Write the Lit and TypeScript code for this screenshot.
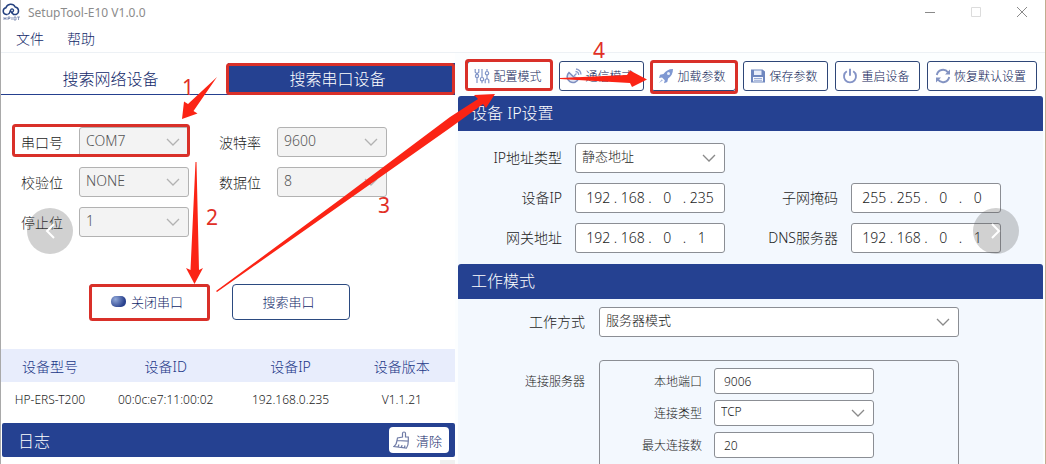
import { LitElement, html, css, svg, nothing, TemplateResult } from "lit";
import { customElement } from "lit/decorators.js";
import { classMap } from "lit/directives/class-map.js";

const chevron = html`<svg class="chev" viewBox="0 0 14 8" width="14" height="8" aria-hidden="true">
  <path d="M1 1l6 6 6-6" fill="none" stroke="currentColor" stroke-width="1.3" />
</svg>`;

const icons: Record<string, TemplateResult> = {
  sliders: svg`<g fill="none" stroke="#8296c8" stroke-width="1.2">
    <path d="M1.200 1v3.200l1.800 1.600 1.800-1.600V1M3 5.800v9.200M8 1v8.500M8 13v2.200M13 1v2.500M13 7v3.200M11.200 15.200V12l1.800-1.600 1.800 1.600v3.200"/>
    <circle cx="3" cy="8" r="1.600" fill="#fff"/><circle cx="8" cy="11.200" r="1.700" fill="#fff"/><circle cx="13" cy="5.200" r="1.700" fill="#fff"/></g>`,
  dish: svg`<path d="M3 4.500a5.800 5.800 0 1 0 9.500 6L7.800 9z" fill="#dfe5f4" stroke="#7f8fc0" stroke-width="1.600"/>
    <path d="M8 8l2.500-2.500M9.500 3.500a3.500 3.500 0 0 1 3.200 3.500M10 1a6 6 0 0 1 5 5.500" fill="none" stroke="#8e9dca" stroke-width="1.300"/>`,
  rocket: svg`<path d="M15 1C10.500 1 7.500 3 5.500 6L2 6.800 1 10l3-.4L6.800 12.300 6 15.300l3.300-1.200.8-3.600C13.200 8.500 15 5.500 15 1z" fill="#7f98d2"/>
    <circle cx="10.500" cy="5.500" r="1.500" fill="#eaf0fb"/><path d="M3.800 11.300L1 15l3.800-2.600z" fill="#a5b6df"/>`,
  save: svg`<path d="M1 1.500h11.500l2.500 2v11H1z" fill="#6f87bf"/>
    <path d="M4 2.500h7.500v4.500H4z" fill="#e9eefa"/><path d="M3 9h10v4.500H3z" fill="#f6f8fd"/>
    <path d="M4 10.500h8M4 12.300h8" stroke="#8fa2d0" stroke-width=".9"/>`,
  power: svg`<path d="M4.800 3.300a6 6 0 1 0 6.400 0" fill="none" stroke="#8493c6" stroke-width="1.900"/>
    <path d="M8 .8v7" stroke="#8493c6" stroke-width="1.900"/>`,
  reset: svg`<path d="M1.800 7A6.300 6.300 0 0 1 13 4.300M14.200 9A6.300 6.300 0 0 1 3 11.700" fill="none" stroke="#8393c2" stroke-width="1.900"/>
    <path d="M15 1.500v5h-5zM1 14.500v-5h5z" fill="#8393c2"/>`,
};

const icon = (name: string) =>
  html`<svg class="ico" viewBox="0 0 16 16" width="16" height="16" aria-hidden="true">${icons[name]}</svg>`;

@customElement("app-root")
export class AppRoot extends LitElement {
  static styles = css`
    :host {
      display: block;
      font-family: "Noto Sans", "Noto Sans CJK SC", sans-serif;
      font-size: 14px;
      font-weight: 300;
      color: #1c1c1c;
    }
    * { box-sizing: border-box; }
    button, select, input { font: inherit; color: inherit; margin: 0; }
    button { cursor: pointer; }
    .window {
      position: relative;
      height: 100vh;
      overflow: hidden;
      display: flex;
      flex-direction: column;
      background: #fff;
      border-left: 1px solid #a9a9a9;
      border-right: 1px solid #c2ad8f;
    }
    .titlebar {
      display: flex;
      align-items: center;
      height: 24px;
      flex: none;
      font-size: 12px;
      font-weight: 400;
      color: #8b8b8b;
    }
    .logo { margin-left: 1px; }
    .title { margin-left: 8px; flex: 1; }
    .winctl {
      display: flex;
      width: 46px;
      padding: 0;
      border: 0;
      background: none;
      justify-content: center;
      color: #8a8a8a;
    }
    .winctl.dim { color: #dcdcdc; }
    .menu {
      display: flex;
      flex: none;
      gap: 23px;
      height: 29px;
      padding: 2px 15px 0;
      border-bottom: 1px solid #edf1f5;
      align-items: center;
    }
    .menu button {
      border: 0;
      padding: 0;
      background: none;
      color: #12296a;
      line-height: 20px;
      height: 22px;
    }
    .main {
      flex: 1;
      min-height: 0;
      display: grid;
      grid-template-columns: 454fr 585fr;
      column-gap: 3px;
      padding-right: 2px;
      background: #fcfeff;
    }
    .left { background: #fff; display: flex; flex-direction: column; min-width: 0; }
    .tabs {
      display: flex;
      margin-top: 10px;
      height: 32px;
      flex: none;
      border-bottom: 1px solid #25408f;
    }
    .tab {
      flex: 1;
      border: 0;
      padding: 0 8px 2px 0;
      background: none;
      font-size: 16px;
      color: #12296a;
    }
    .tab.on { background: #254191; color: #fff; }
    .serial {
      display: grid;
      grid-template-columns: 42px 110px 56px 110px;
      column-gap: 16px;
      row-gap: 10px;
      margin: 32px 20px 0;
      align-items: center;
    }
    .serial .second { padding-left: 14px; }
    .pick { display: grid; align-items: center; }
    .pick select, .pick .chev { grid-area: 1 / 1; }
    .pick .chev { justify-self: end; margin-right: 9px; pointer-events: none; color: #8a8a8a; }
    .pick select, .box {
      appearance: none;
      width: 100%;
      height: 30px;
      padding: 0 6px 2px;
      border: 1px solid #8b8e94;
      border-radius: 3px;
      background: #fff;
      color: #1c1c1c;
      outline: 0;
    }
    .pick select { font-size: 13px; padding-bottom: 4px; }
    .pick.off select {
      font-size: 14px;
      background: #f3f3f3;
      border-color: #b2b2b2;
      color: #555;
      opacity: 1;
    }
    .pick.off .chev { color: #b2b2b2; }
    .actions { display: flex; gap: 22px; margin: 47px 88px 0; }
    .actions button {
      display: flex;
      align-items: center;
      justify-content: center;
      gap: 5px;
      width: 118px;
      height: 36px;
      padding: 0 5px 2px 0;
      font-size: 13px;
      border: 1px solid #2b4a80;
      border-radius: 4px;
      background: #fff;
      color: #12296a;
    }
    .actions button:first-child { width: 121px; }
    .led { width: 15px; height: 11px; border-radius: 5px; background: radial-gradient(circle at 30% 30%, #92a9d9, #2b438f 70%); }
    table {
      width: 100%;
      margin-top: 29px;
      border-collapse: collapse;
      table-layout: fixed;
      text-align: center;
      flex: none;
    }
    th { height: 33px; padding: 0 2px 0 0; background: #e8edfc; color: #1b3687; font-weight: inherit; }
    td { height: 41px; padding: 0 2px 6px 0; font-size: 12px; }
    .c1 { width: 22%; }
    .c2 { width: 29%; }
    .c3 { width: 26%; }
    .log {
      display: flex;
      flex: none;
      align-items: center;
      justify-content: space-between;
      height: 34px;
      padding: 0 6px 0 16px;
      margin-left: 1px;
      border-radius: 2px;
      background: #254191;
      color: #fff;
    }
    h2 { margin: 0; font-size: 16px; font-weight: inherit; }
    .clear {
      display: flex;
      align-items: center;
      gap: 5px;
      height: 26px;
      padding: 0 7px 0 4px;
      border: 0;
      border-radius: 4px;
      background: #fff;
      color: #12296a;
      font-size: 13px;
    }
    .logbody { flex: 1; display: flex; justify-content: flex-end; padding-top: 3px; }
    .bar { width: 15px; background: #f0f0f0; }
    .right { display: flex; flex-direction: column; min-width: 0; }
    .tools { display: flex; gap: 7px; padding: 8px 0 5px 9px; flex: none; }
    .tools button {
      display: flex;
      align-items: center;
      justify-content: center;
      gap: 3px;
      width: 85px;
      height: 30px;
      padding: 0 3px 0 0;
      white-space: nowrap;
      font-size: 12px;
      border: 1px solid #2e4677;
      border-radius: 3px;
      background: #fff;
      color: #0f2458;
    }
    .tools button.wide { width: 110px; }
    .bar2 {
      display: flex;
      align-items: center;
      flex: none;
      height: 35px;
      padding: 0 13px 3px;
      border-radius: 3px 3px 0 0;
      background: #254191;
      color: #fff;
    }
    .ip {
      display: grid;
      grid-template-columns: 104px 150px 100px 150px;
      column-gap: 13px;
      row-gap: 10px;
      padding: 12px 0 11px;
      align-items: center;
      background: #f3f8fe;
    }
    .lab { text-align: right; white-space: nowrap; padding-bottom: 2px; }
    .ip .third { grid-column: 3; }
    .ip .brk { grid-column: 1; }
    .addr { display: flex; align-items: center; height: 30px; padding: 0 10px 2px; }
    .addr input {
      width: 25px;
      min-width: 0;
      padding: 0;
      border: 0;
      text-align: center;
      background: none;
      outline: 0;
    }
    .addr span { width: 10px; text-align: center; }
    .work { flex: 1; background: #f3f8fe; padding: 8px 84px 0 0; }
    .workgrid {
      display: grid;
      grid-template-columns: 127px 1fr;
      column-gap: 14px;
      row-gap: 23px;
      align-items: start;
    }
    .workgrid > .lab { padding-top: 4px; }
    .small { font-size: 12px; }
    .workgrid > .small { padding-top: 12px; }
    .server {
      display: grid;
      grid-template-columns: 102px 160px;
      column-gap: 12px;
      row-gap: 6px;
      align-items: center;
      min-width: 0;
      height: 140px;
      align-content: start;
      margin: 0;
      padding: 7px 0;
      border: 1px solid #8b8e94;
      border-radius: 4px;
      font-size: 12px;
    }
    .server .lab { padding: 0; }
    .server select { height: 26px; font-size: 12px; }
    .server .box { height: 26px; padding: 0 9px; }
    .nav {
      position: absolute;
      top: 208px;
      width: 46px;
      height: 46px;
      padding: 0;
      border: 0;
      border-radius: 50%;
      background: rgba(90, 90, 90, 0.28);
      display: grid;
      place-items: center;
    }
    .nav.prev { left: 26px; }
    .nav.next { right: 26px; }
    .notes { position: absolute; top: 0; left: -1px; pointer-events: none; }
    .note { font-size: 21px; font-weight: 400; fill: #e12f26; }
  `;

  private pick(id: string, options: string[], off = false) {
    return html`<div class=${classMap({ pick: true, off })}>
      <select id=${id} ?disabled=${off}>${options.map((o) => html`<option>${o}</option>`)}</select>${chevron}
    </div>`;
  }

  private serialField(id: string, label: string, value: string, second = false) {
    return html`<label for=${id} class=${second ? "second" : nothing}>${label}</label>${this.pick(id, [value], true)}`;
  }

  private address(id: string, label: string, parts: string[], cls: string) {
    return html`<label class="lab ${cls}" for=${id}>${label}</label>
      <div class="box addr">
        ${parts.map((p, i) => html`${i ? html`<span>.</span>` : nothing}<input
            id=${i ? `${id}-${i}` : id} aria-label="${label} ${i + 1}" maxlength="3" .value=${p} />`)}
      </div>`;
  }

  render() {
    return html`<div class="window">
      <header class="titlebar">
        <svg class="logo" width="18" height="18" viewBox="0 0 18 18" aria-hidden="true">
          <path d="M5.500 11.500H4.200a3.400 3.400 0 0 1-.3-6.700A5 5 0 0 1 13.200 4a3.900 3.900 0 0 1 .8 7.500h-2.500L8 7.500" fill="none" stroke="#24407f" stroke-width="1.500"/>
          <path d="M5.500 11.500C7 11 8 9.500 8.500 7.500S11 5.500 11.500 7 10 9.500 9 10" fill="none" stroke="#24407f" stroke-width="1.300"/>
          <path d="M2 14v3M4 14v3M2 15.500h2M6 17v-3h2v1.500H6M10 14v3M12 14h2v3h-2zM15 14h3M16.500 14v3" fill="none" stroke="#5b6f9d" stroke-width=".7"/>
        </svg>
        <span class="title">SetupTool-E10 V1.0.0</span>
        <button class="winctl" aria-label="最小化"><svg width="12" height="12"><path d="M1 6.500h10" stroke="currentColor"/></svg></button>
        <button class="winctl dim" aria-label="最大化"><svg width="12" height="12"><path d="M1.500 1.500h9v9h-9z" fill="none" stroke="currentColor"/></svg></button>
        <button class="winctl" aria-label="关闭"><svg width="12" height="12"><path d="M1 1l10 10M11 1L1 11" stroke="currentColor"/></svg></button>
      </header>
      <nav class="menu"><button>文件</button><button>帮助</button></nav>

      <div class="main">
        <section class="left">
          <div class="tabs" role="tablist">
            <button class="tab" role="tab">搜索网络设备</button>
            <button class="tab on" role="tab" aria-selected="true">搜索串口设备</button>
          </div>
          <div class="serial">
            ${this.serialField("port", "串口号", "COM7")}
            ${this.serialField("baud", "波特率", "9600", true)}
            ${this.serialField("parity", "校验位", "NONE")}
            ${this.serialField("data", "数据位", "8", true)}
            ${this.serialField("stop", "停止位", "1")}
          </div>
          <div class="actions">
            <button><span class="led"></span>关闭串口</button>
            <button>搜索串口</button>
          </div>
          <table>
            <thead><tr><th class="c1">设备型号</th><th class="c2">设备ID</th><th class="c3">设备IP</th><th>设备版本</th></tr></thead>
            <tbody><tr><td>HP-ERS-T200</td><td>00:0c:e7:11:00:02</td><td>192.168.0.235</td><td>V1.1.21</td></tr></tbody>
          </table>
          <div class="log">
            <h2>日志</h2>
            <button class="clear">
              <svg width="18" height="18" viewBox="0 0 18 18" fill="none" stroke="#6f7ba6" stroke-width="1.200" aria-hidden="true">
                <path d="M9.500 6V2.500a1.500 1.500 0 0 1 3 0V6h2.800v4L4 9.500 4.500 7zM4 9.500C3.500 13 2.500 14.500 1 15.500l12.500 1.500c1.200-1.500 1.800-4 1.800-7M5 16l1-2.500M8.500 16.500l.5-2.500M11.500 16.500l.5-2"/>
              </svg>清除
            </button>
          </div>
          <div class="logbody"><div class="bar"></div></div>
        </section>

        <section class="right">
          <div class="tools">
            <button>${icon("sliders")}配置模式</button>
            <button>${icon("dish")}通信模式</button>
            <button>${icon("rocket")}加载参数</button>
            <button>${icon("save")}保存参数</button>
            <button>${icon("power")}重启设备</button>
            <button class="wide">${icon("reset")}恢复默认设置</button>
          </div>
          <div class="bar2"><h2>设备 IP设置</h2></div>
          <div class="ip">
            <label class="lab" for="iptype">IP地址类型</label>${this.pick("iptype", ["静态地址", "动态地址"])}
            ${this.address("devip", "设备IP", ["192", "168", "0", "235"], "brk")}
            ${this.address("mask", "子网掩码", ["255", "255", "0", "0"], "third")}
            ${this.address("gate", "网关地址", ["192", "168", "0", "1"], "brk")}
            ${this.address("dns", "DNS服务器", ["192", "168", "0", "1"], "third")}
          </div>
          <div class="bar2"><h2>工作模式</h2></div>
          <div class="work">
            <div class="workgrid">
              <label class="lab" for="mode">工作方式</label>${this.pick("mode", ["服务器模式", "客户端模式"])}
              <span class="lab small" id="srv">连接服务器</span>
              <fieldset class="server" aria-labelledby="srv">
                <label class="lab" for="lport">本地端口</label><input class="box" id="lport" .value=${"9006"} />
                <label class="lab" for="ctype">连接类型</label>${this.pick("ctype", ["TCP", "UDP"])}
                <label class="lab" for="maxc">最大连接数</label><input class="box" id="maxc" .value=${"20"} />
              </fieldset>
            </div>
          </div>
        </section>
      </div>

      <button class="nav prev" aria-label="上一张"><svg width="10" height="16"><path d="M9 1L2 8l7 7" fill="none" stroke="#fff" stroke-width="2"/></svg></button>
      <button class="nav next" aria-label="下一张"><svg width="10" height="16"><path d="M1 1l7 7-7 7" fill="none" stroke="#fff" stroke-width="2"/></svg></button>

      <svg class="notes" width="1046" height="464" viewBox="0 0 1046 464">
        <g fill="none" stroke="#d93029" stroke-width="3">
          <rect x="227.500" y="64.500" width="226" height="29" rx="2"/>
          <rect x="13.500" y="125.500" width="175" height="30" rx="2"/>
          <rect x="90.500" y="285.500" width="118" height="34" rx="2"/>
          <rect x="466.500" y="60.500" width="85" height="29" rx="2"/>
          <rect x="651.500" y="61.500" width="85" height="31" rx="2"/>
        </g>
        <g fill="#fb2415">
          <path d="M217 77L193.500 111l4 2.500L182 119l2-17.500 4 2.500z"/>
          <path d="M195.500 162h1L199 270l4-2-8.500 16-8.500-16 4.500 2z"/>
          <path d="M216 291L340 199.500 450 117 478 99l-4-4 21-1-9 14-3-4-33 24L345 202 217 292z"/>
          <path d="M560 78l67-3 3-4.500 17 9L632 87l-2-4-70-4z"/>
        </g>
        <text class="note" x="182" y="95">1</text>
        <text class="note" x="206" y="225">2</text>
        <text class="note" x="378" y="213">3</text>
        <text class="note" x="593" y="58">4</text>
      </svg>
    </div>`;
  }
}
